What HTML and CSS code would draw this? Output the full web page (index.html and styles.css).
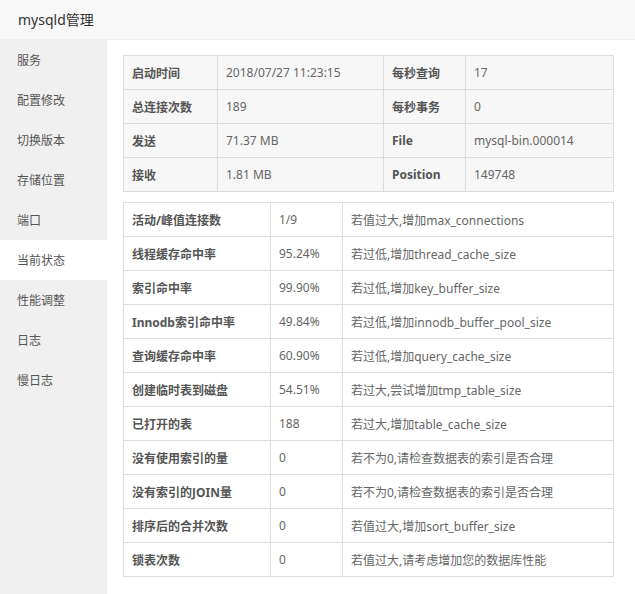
FILE: index.html
```html
<!DOCTYPE html>
<html lang="zh-CN">
<head>
<meta charset="utf-8">
<title>mysqld管理</title>
<link rel="stylesheet" href="styles.css">
</head>
<body>
<div class="window">
  <div class="header">mysqld管理</div>
  <div class="main">
    <ul class="side">
      <li class="item">服务</li>
      <li class="item">配置修改</li>
      <li class="item">切换版本</li>
      <li class="item">存储位置</li>
      <li class="item">端口</li>
      <li class="item active">当前状态</li>
      <li class="item">性能调整</li>
      <li class="item">日志</li>
      <li class="item">慢日志</li>
    </ul>
    <div class="content">
      <table class="tbl tbl-info">
        <colgroup><col class="c1"><col class="c2"><col class="c3"><col class="c4"></colgroup>
        <tr><th>启动时间</th><td>2018/07/27 11:23:15</td><th>每秒查询</th><td>17</td></tr>
        <tr><th>总连接次数</th><td>189</td><th>每秒事务</th><td>0</td></tr>
        <tr><th>发送</th><td>71.37 MB</td><th>File</th><td>mysql-bin.000014</td></tr>
        <tr><th>接收</th><td>1.81 MB</td><th>Position</th><td>149748</td></tr>
      </table>
      <table class="tbl tbl-stat">
        <colgroup><col class="s1"><col class="s2"><col class="s3"></colgroup>
        <tr><th>活动/峰值连接数</th><td>1/9</td><td>若值过大,增加max_connections</td></tr>
        <tr><th>线程缓存命中率</th><td>95.24%</td><td>若过低,增加thread_cache_size</td></tr>
        <tr><th>索引命中率</th><td>99.90%</td><td>若过低,增加key_buffer_size</td></tr>
        <tr><th>Innodb索引命中率</th><td>49.84%</td><td>若过低,增加innodb_buffer_pool_size</td></tr>
        <tr><th>查询缓存命中率</th><td>60.90%</td><td>若过低,增加query_cache_size</td></tr>
        <tr><th>创建临时表到磁盘</th><td>54.51%</td><td>若过大,尝试增加tmp_table_size</td></tr>
        <tr><th>已打开的表</th><td>188</td><td>若过大,增加table_cache_size</td></tr>
        <tr><th>没有使用索引的量</th><td>0</td><td>若不为0,请检查数据表的索引是否合理</td></tr>
        <tr><th>没有索引的JOIN量</th><td>0</td><td>若不为0,请检查数据表的索引是否合理</td></tr>
        <tr><th>排序后的合并次数</th><td>0</td><td>若值过大,增加sort_buffer_size</td></tr>
        <tr><th>锁表次数</th><td>0</td><td>若值过大,请考虑增加您的数据库性能</td></tr>
      </table>
    </div>
  </div>
</div>
</body>
</html>
```

FILE: styles.css
```css
html, body {
  margin: 0;
  padding: 0;
  background: #fff;
}
body {
  font-family: "Noto Sans", "Noto Sans CJK SC", sans-serif;
  font-size: 12px;
  color: #666;
}
.window {
  width: 635px;
  height: 594px;
  display: flex;
  flex-direction: column;
  overflow: hidden;
}
.header {
  height: 39px;
  line-height: 40px;
  padding-left: 18px;
  font-size: 14px;
  color: #333;
  background: #f8f8f8;
  border-bottom: 1px solid #eee;
  flex: none;
}
.main {
  flex: 1;
  display: flex;
}
.side {
  list-style: none;
  margin: 0;
  padding: 0;
  width: 107px;
  background: #f0f0f0;
  flex: none;
}
.item {
  height: 38px;
  line-height: 38px;
  padding: 2px 0 0 17px;
  color: #555;
  font-size: 12px;
}
.item.active {
  background: #fff;
}
.content {
  padding: 15px 0 0 16px;
}
.tbl {
  border-collapse: collapse;
  table-layout: fixed;
  width: 490px;
  margin-bottom: 10px;
}
.tbl th, .tbl td {
  height: 33px;
  padding: 0 8px;
  border: 1px solid #ddd;
  text-align: left;
  white-space: nowrap;
  overflow: hidden;
}
.tbl th {
  font-weight: bold;
  color: #555;
}
.tbl td {
  color: #666;
}
.tbl-info th, .tbl-info td {
  background: #f7f7f7;
}
.c1 { width: 94px; }
.c2 { width: 166px; }
.c3 { width: 82px; }
.c4 { width: 148px; }
.s1 { width: 147px; }
.s2 { width: 72px; }
.s3 { width: 271px; }
```
